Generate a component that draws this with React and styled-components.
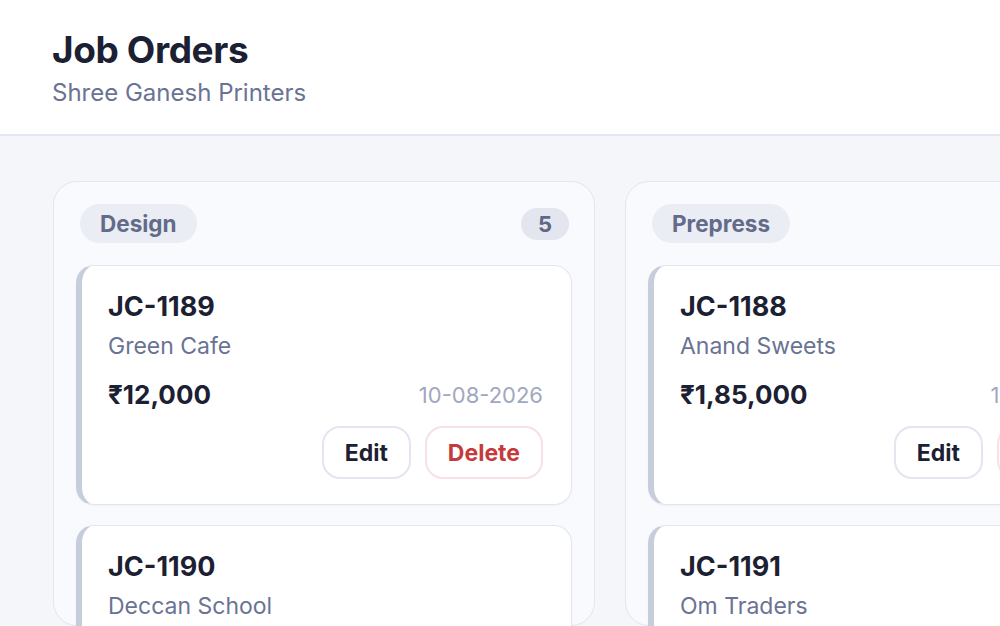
import React from "react";
import styled, { createGlobalStyle } from "styled-components";

const Global = createGlobalStyle`
  html, body { margin: 0; padding: 0; }
  body {
    font-family: Inter, "Noto Sans", "Liberation Sans", sans-serif;
    background: #f4f6fa;
    color: #1c2033;
    width: 1000px;
    height: 626px;
    overflow: hidden;
  }
`;

const Page = styled.div`
  display: flex;
  flex-direction: column;
  height: 626px;
  overflow: hidden;
`;

const Header = styled.header`
  background: #ffffff;
  border-bottom: 2px solid #e4e7f0;
  padding: 28px 52px 0;
  height: 136px;
  box-sizing: border-box;
  flex-shrink: 0;
`;

const Title = styled.h1`
  margin: 0;
  font-size: 37px;
  line-height: 1.2;
  font-weight: 700;
  letter-spacing: -0.4px;
  color: #1c2033;
`;

const Subtitle = styled.div`
  margin-top: 5px;
  font-size: 24px;
  line-height: 1.3;
  color: #6a7394;
`;

const Board = styled.main`
  display: flex;
  gap: 30px;
  padding: 45px 0 0 53px;
  overflow: hidden;
`;

const Column = styled.section`
  flex: 0 0 542px;
  box-sizing: border-box;
  background: #f9fafd;
  border: 1px solid #e3e6f0;
  border-radius: 24px;
  padding: 22px 22px;
  display: flex;
  flex-direction: column;
  gap: 20px;
`;

const ColumnHead = styled.div`
  display: flex;
  align-items: center;
  justify-content: space-between;
  height: 39px;
  padding: 0 3px 0 4px;
  margin-bottom: 2px;
`;

const StagePill = styled.span`
  display: inline-flex;
  align-items: center;
  height: 39px;
  padding: 0 20px;
  border-radius: 999px;
  background: #eaedf4;
  color: #636b8a;
  font-weight: 700;
  font-size: 22.5px;
`;

const CountPill = styled.span`
  display: inline-flex;
  align-items: center;
  justify-content: center;
  height: 32px;
  min-width: 48px;
  box-sizing: border-box;
  padding: 0 14px;
  border-radius: 999px;
  background: #e3e6ee;
  color: #5f6786;
  font-weight: 700;
  font-size: 22px;
`;

const Card = styled.article`
  background: #ffffff;
  border: 1px solid #e3e6f0;
  border-left: 6px solid #c6cedc;
  border-radius: 18px;
  padding: 24px 28px 25px 26px;
  display: flex;
  flex-direction: column;
  box-shadow: 0 1px 2px rgba(30, 40, 80, 0.04);
`;

const JobId = styled.div`
  font-size: 27px;
  line-height: 1.25;
  font-weight: 700;
  color: #1c2033;
`;

const Client = styled.div`
  margin-top: 8px;
  font-size: 23px;
  line-height: 1.3;
  color: #6a7394;
`;

const MetaRow = styled.div`
  margin-top: 16px;
  display: flex;
  align-items: center;
  justify-content: space-between;
  white-space: nowrap;
`;

const Amount = styled.div`
  font-size: 26px;
  line-height: 1.3;
  font-weight: 700;
  color: #1c2033;
`;

const DateText = styled.div`
  font-size: 22px;
  color: #a0a8bf;
`;

const Actions = styled.div`
  margin-top: 15px;
  display: flex;
  justify-content: flex-end;
  gap: 14px;
`;

const Button = styled.button`
  font-family: inherit;
  height: 53px;
  padding: 0 21px;
  border-radius: 18px;
  background: #ffffff;
  font-size: 23px;
  font-weight: 700;
  cursor: pointer;
  border: 2px solid ${(p) => (p.$danger ? "#f8e1e3" : "#e3e6f1")};
  color: ${(p) => (p.$danger ? "#c53a3a" : "#1c2033")};
`;

const columns = [
  {
    name: "Design",
    count: 5,
    jobs: [
      { id: "JC-1189", client: "Green Cafe", amount: "₹12,000", date: "10-08-2026" },
      { id: "JC-1190", client: "Deccan School", amount: "₹8,500", date: "12-08-2026" },
    ],
  },
  {
    name: "Prepress",
    count: 3,
    jobs: [
      { id: "JC-1188", client: "Anand Sweets", amount: "₹1,85,000", date: "14-08-2026" },
      { id: "JC-1191", client: "Om Traders", amount: "₹22,400", date: "15-08-2026" },
    ],
  },
];

export default function App() {
  return (
    <Page>
      <Global />
      <Header>
        <Title>Job Orders</Title>
        <Subtitle>Shree Ganesh Printers</Subtitle>
      </Header>
      <Board>
        {columns.map((col) => (
          <Column key={col.name}>
            <ColumnHead>
              <StagePill>{col.name}</StagePill>
              <CountPill>{col.count}</CountPill>
            </ColumnHead>
            {col.jobs.map((job) => (
              <Card key={job.id}>
                <JobId>{job.id}</JobId>
                <Client>{job.client}</Client>
                <MetaRow>
                  <Amount>{job.amount}</Amount>
                  <DateText>{job.date}</DateText>
                </MetaRow>
                <Actions>
                  <Button>Edit</Button>
                  <Button $danger>Delete</Button>
                </Actions>
              </Card>
            ))}
          </Column>
        ))}
      </Board>
    </Page>
  );
}
